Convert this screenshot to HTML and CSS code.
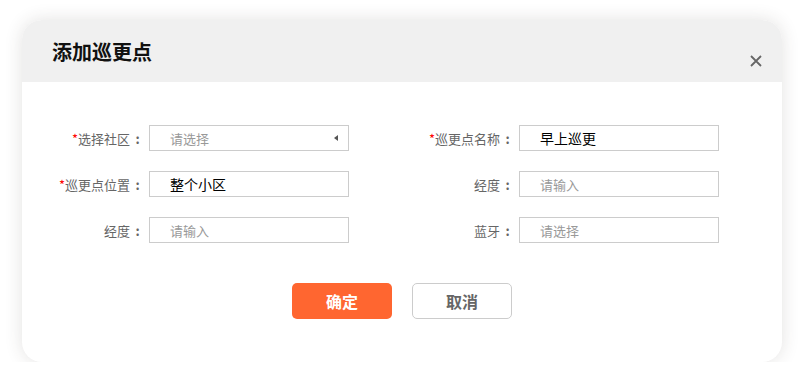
FILE: index.html
```html
<!DOCTYPE html>
<html lang="zh-CN">
<head>
  <meta charset="UTF-8" />
  <title>添加巡更点</title>
  <link rel="stylesheet" href="styles.css">
</head>
<body>
  <div class="dialog">
    <div class="dialog-header">
      <h3>添加巡更点</h3>
      <span class="close">
        <svg width="12" height="12" viewBox="0 0 12 12"><path d="M1 1L11 11M11 1L1 11" stroke="#666" stroke-width="1.8" fill="none"/></svg>
      </span>
    </div>

    <div class="dialog-body">
      <div class="form-grid">
        <div class="field">
          <label><span class="req">*</span>选择社区<span class="colon">:</span></label>
          <div class="input select">
            <span class="placeholder">请选择</span>
            <span class="arrow"></span>
          </div>
        </div>
        <div class="field">
          <label><span class="req">*</span>巡更点名称<span class="colon">:</span></label>
          <div class="input"><span class="value">早上巡更</span></div>
        </div>
        <div class="field">
          <label><span class="req">*</span>巡更点位置<span class="colon">:</span></label>
          <div class="input"><span class="value">整个小区</span></div>
        </div>
        <div class="field">
          <label>经度<span class="colon">:</span></label>
          <div class="input"><span class="placeholder">请输入</span></div>
        </div>
        <div class="field">
          <label>经度<span class="colon">:</span></label>
          <div class="input"><span class="placeholder">请输入</span></div>
        </div>
        <div class="field">
          <label>蓝牙<span class="colon">:</span></label>
          <div class="input"><span class="placeholder">请选择</span></div>
        </div>
      </div>

      <div class="actions">
        <button class="btn btn-primary">确定</button>
        <button class="btn btn-default">取消</button>
      </div>
    </div>
  </div>
</body>
</html>
```

FILE: styles.css
```css
body {
  margin: 0;
  background: #fff;
  font-family: "Noto Sans CJK SC", "Noto Sans", sans-serif;
  color: #333;
}
.dialog {
  width: 760px;
  margin: 20px 0 0 22px;
  background: #fff;
  border-radius: 20px;
  box-shadow: 0 0 18px rgba(60, 50, 40, 0.14);
  overflow: hidden;
}
.dialog-header {
  position: relative;
  height: 62px;
  background: #f0f0f0;
  padding-left: 30px;
  display: flex;
  align-items: center;
}
.dialog-header h3 {
  margin: 0;
  font-size: 20px;
  font-weight: bold;
  color: #111;
}
.close {
  position: absolute;
  right: 20px;
  top: 35px;
  width: 12px;
  height: 12px;
  display: flex;
}
.dialog-body {
  padding: 43px 0 43px 3px;
}
.form-grid {
  display: grid;
  grid-template-columns: 324px 324px;
  column-gap: 46px;
  row-gap: 20px;
}
.field {
  display: flex;
  align-items: center;
}
.field label {
  width: 120px;
  margin-right: 4px;
  text-align: right;
  font-size: 13px;
  color: #666;
  white-space: nowrap;
}
.colon {
  display: inline-block;
  width: 15px;
  text-align: center;
  font-weight: bold;
}
.req {
  color: #f00;
}
.input {
  position: relative;
  box-sizing: border-box;
  width: 200px;
  height: 26px;
  border: 1px solid #ccc;
  padding-left: 20px;
  display: flex;
  align-items: center;
  font-size: 14px;
}
.placeholder {
  color: #999;
  font-size: 13px;
}
.value {
  color: #000;
}
.arrow {
  position: absolute;
  right: 10px;
  top: 9px;
  width: 0;
  height: 0;
  border-top: 3px solid transparent;
  border-bottom: 3px solid transparent;
  border-right: 4px solid #555;
}
.actions {
  display: flex;
  justify-content: center;
  gap: 20px;
  margin-top: 40px;
  padding-right: 3px;
}
.btn {
  width: 100px;
  height: 36px;
  border-radius: 5px;
  font-family: inherit;
  font-size: 16px;
  font-weight: bold;
  cursor: pointer;
}
.btn-primary {
  background: #ff6630;
  border: none;
  color: #fff;
}
.btn-default {
  background: #fff;
  border: 1px solid #ccc;
  color: #666;
}
```
